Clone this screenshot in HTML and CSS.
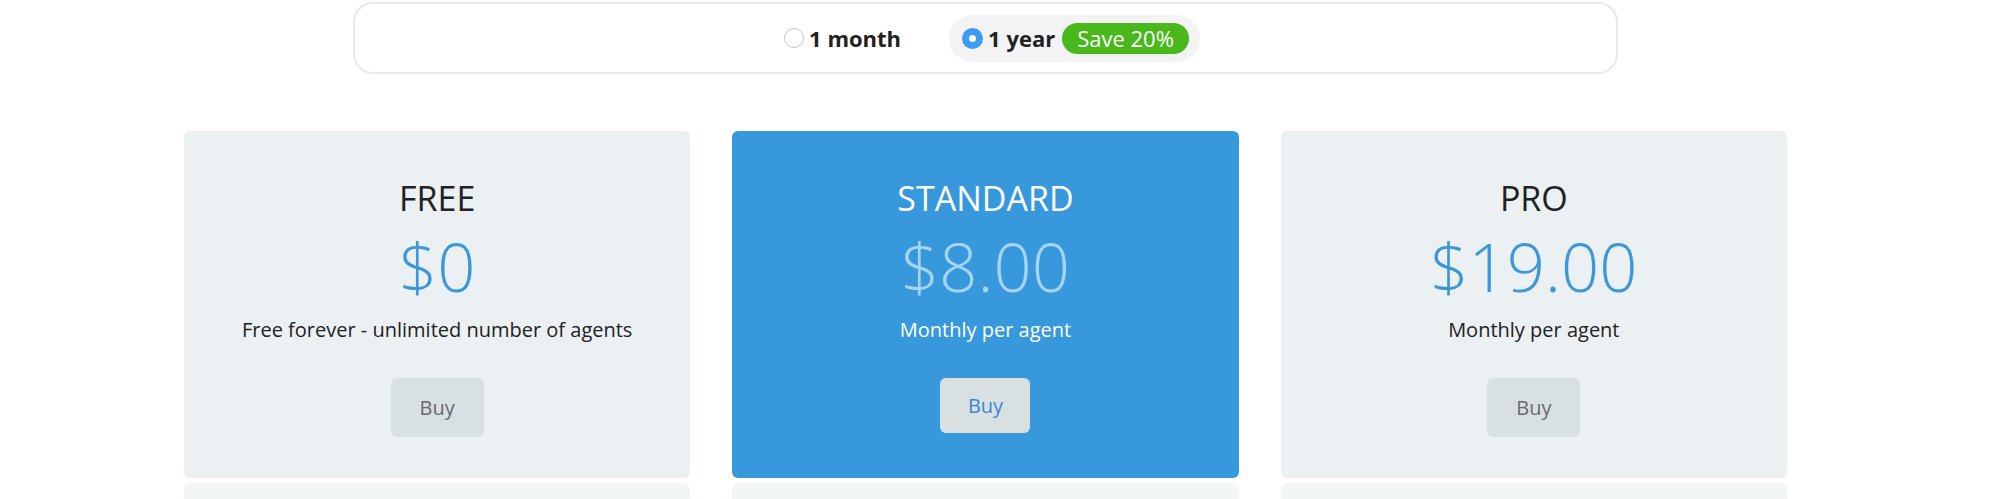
FILE: index.html
```html
<!DOCTYPE html>
<html lang="en">
<head>
    <meta charset="UTF-8">
    <title>Pricing</title>
    <link rel="stylesheet" href="styles.css">
</head>
<body>
    <div class="pricing">
        <div class="period">
            <label class="period-option">
                <span class="radio"></span>
                <span class="period-name">1 month</span>
            </label>
            <label class="period-option active">
                <span class="radio checked"></span>
                <span class="period-name">1 year</span>
                <span class="save">Save 20%</span>
            </label>
        </div>

        <div class="plans">
            <div class="plan">
                <h2 class="plan-title">FREE</h2>
                <div class="plan-price">$0</div>
                <p class="plan-desc">Free forever - unlimited number of agents</p>
                <button class="buy">Buy</button>
            </div>
            <div class="plan featured">
                <h2 class="plan-title">STANDARD</h2>
                <div class="plan-price">$8.00</div>
                <p class="plan-desc">Monthly per agent</p>
                <button class="buy">Buy</button>
            </div>
            <div class="plan">
                <h2 class="plan-title">PRO</h2>
                <div class="plan-price">$19.00</div>
                <p class="plan-desc">Monthly per agent</p>
                <button class="buy">Buy</button>
            </div>
            <div class="plan-more"></div>
            <div class="plan-more"></div>
            <div class="plan-more"></div>
        </div>
    </div>
</body>
</html>
```

FILE: styles.css
```css
*{
    margin: 0;
    padding: 0;
    box-sizing: border-box;
}
body{
    background: #ffffff;
    font-family: "Open Sans", "Noto Sans", sans-serif;
    color: #222222;
    overflow: hidden;
}
.pricing{
    width: 1603px;
    margin-left: 184px;
}

/* billing period switch */
.period{
    width: 1265px;
    height: 72px;
    margin: 2px auto 0;
    border: 2px solid #e9e9e9;
    border-radius: 20px;
    display: flex;
    align-items: center;
    justify-content: center;
    gap: 37px;
}
.period-option{
    display: flex;
    align-items: center;
    height: 47px;
    padding: 0 11px 0 13px;
    border-radius: 24px;
    cursor: pointer;
}
.period-option.active{
    background: #f3f3f3;
}
.radio{
    width: 20px;
    height: 20px;
    border-radius: 50%;
    border: 1px solid #c4c4c4;
    background: #ffffff;
    margin-right: 5px;
    position: relative;
}
.radio.checked{
    width: 21px;
    height: 21px;
    border: none;
    background: #3d9bf3;
}
.radio.checked::after{
    content: "";
    position: absolute;
    left: 7px;
    top: 7px;
    width: 7px;
    height: 7px;
    border-radius: 50%;
    background: #ffffff;
}
.period-name{
    font-size: 22px;
    font-weight: 700;
    color: #222222;
}
.save{
    margin-left: 7px;
    height: 31px;
    padding: 0 15px;
    border-radius: 16px;
    background: #48b81c;
    color: #ffffff;
    font-size: 22px;
    line-height: 31px;
}

/* plans */
.plans{
    margin-top: 57px;
    display: grid;
    grid-template-columns: repeat(3, 1fr);
    column-gap: 42px;
    row-gap: 5px;
}
.plan{
    background: #ebf0f2;
    border-radius: 6px;
    padding: 47px 20px 41px;
    display: flex;
    flex-direction: column;
    align-items: center;
    text-align: center;
}
.plan-title{
    font-size: 34px;
    font-weight: 400;
    line-height: 1.2;
    color: #222222;
}
.plan-price{
    margin-top: 7px;
    font-size: 67px;
    font-weight: 300;
    line-height: 1.2;
    color: #3a97dc;
}
.plan-desc{
    margin-top: 10px;
    font-size: 20px;
    line-height: 1.4;
}
.buy{
    margin-top: 34px;
    width: 93px;
    height: 59px;
    border: none;
    border-radius: 6px;
    background: #d8e0e2;
    font-family: inherit;
    font-size: 20px;
    color: #666a6c;
}
.featured{
    background: #3898dc;
}
.featured .plan-title,
.featured .plan-desc{
    color: #ffffff;
}
.featured .plan-price{
    color: #a6d4f7;
}
.featured .buy{
    width: 90px;
    height: 55px;
    color: #3a87d0;
}
.plan-more{
    height: 120px;
    background: #f3f6f7;
    border-radius: 6px;
}
```
